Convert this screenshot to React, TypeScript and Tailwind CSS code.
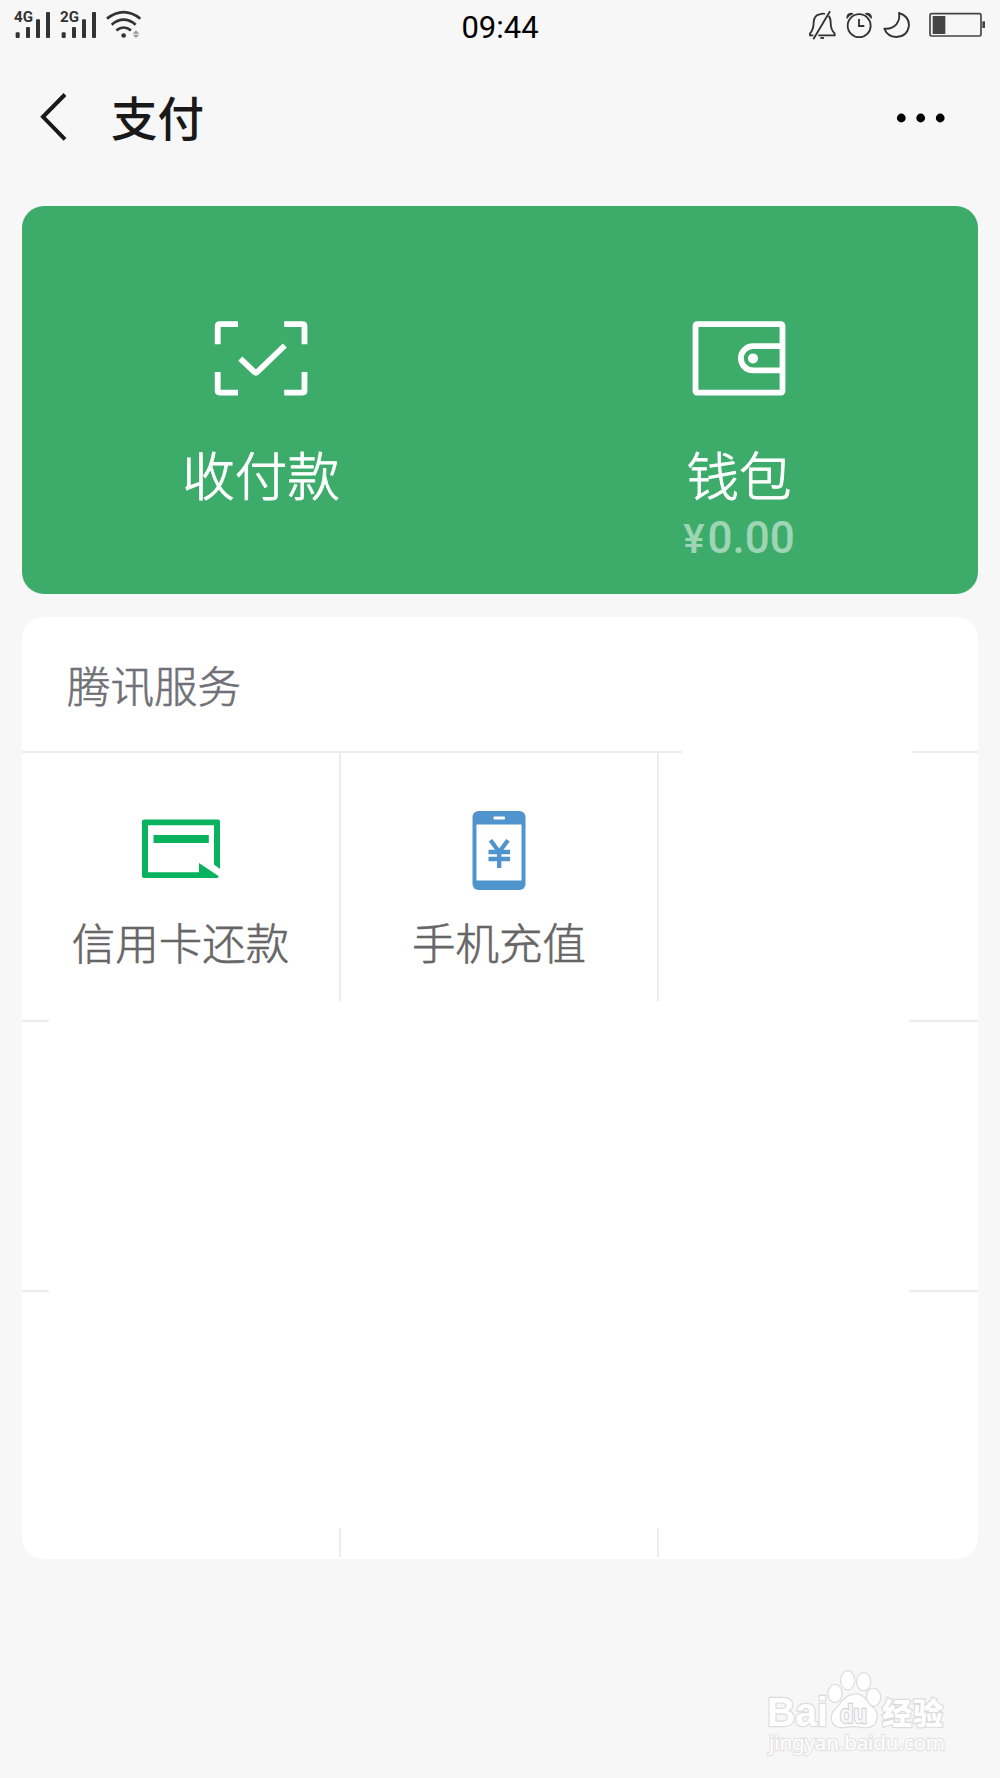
import React from 'react';

interface SignalProps {
  label: string;
}

const Signal: React.FC<SignalProps> = ({ label }) => (
  <svg className="w-[37px] h-[31px]" viewBox="42 30 111 93">
    <g fill="#333">
      <text x="42" y="66" fontSize="42" fontWeight="700" textLength="57" lengthAdjust="spacingAndGlyphs" fontFamily="Roboto, sans-serif">{label}</text>
      <rect x="47" y="97" width="12" height="17" rx="3" />
      <rect x="78" y="81" width="12" height="33" rx="3" />
      <rect x="108" y="58" width="12" height="56" rx="3" />
      <rect x="138" y="36" width="12" height="78" rx="3" />
    </g>
  </svg>
);

const Wifi: React.FC = () => (
  <svg className="w-[35px] h-[31px]" viewBox="318 30 105 93" fill="none" stroke="#333" strokeWidth="8">
    <path d="M321 56 Q371 17 421 56" />
    <path d="M335 74 Q371 44 407 74" />
    <path d="M349 91 Q371 74 393 91" />
    <circle cx="371" cy="106.500" r="7" fill="#333" stroke="none" />
    <path d="M398 101 L408 91 L418 101Z M398 104 L408 114 L418 104Z" fill="#999" stroke="none" />
  </svg>
);

const StatusBar: React.FC = () => (
  <div className="grid grid-cols-3 items-center h-[51px] pl-[14px] pr-[14px]">
    <div className="flex gap-[9px]">
      <Signal label="4G" />
      <Signal label="2G" />
      <Wifi />
    </div>
    <div className="text-center text-[31px] leading-[31px] pt-[3px] text-black font-[Roboto,sans-serif]">09:44</div>
    <div className="flex justify-end">
      <svg className="w-[29px] h-[31px] mr-2" viewBox="84 30 87 93" fill="none" stroke="#333" strokeWidth="5.500">
        <path d="M119 43 Q103 45 101 66 Q101 89 90 100 V106 H100 M115 106 H164 V100 Q152 89 152 68 Q152 54 146 48 M119 43 Q128 39 135 42" />
        <path d="M150 34 L100 118" />
        <path d="M121 114 H132" />
      </svg>
      <svg className="w-[28px] h-[31px] mr-[9px]" viewBox="195 30 84 93" fill="none" stroke="#333" strokeWidth="5.500">
        <circle cx="237.500" cy="77" r="34.500" />
        <path d="M237 57 V78 H253" />
        <path d="M199 55 Q199 39 213 38 Q218 38 221 41 Q208 46 202 56Z M276 55 Q276 39 262 38 Q257 38 254 41 Q267 46 273 56Z" fill="#333" stroke="none" />
      </svg>
      <svg className="w-[29px] h-[31px] mr-[17px]" viewBox="306 30 87 93" fill="none" stroke="#333" strokeWidth="5.500" strokeLinejoin="round">
        <path d="M357 39 Q387 48 387 76 Q383 109 349 111 Q322 110 313 86 Q336 88 349 73 Q361 58 357 39Z" />
      </svg>
      <svg className="w-[58px] h-[31px]" viewBox="444 30 174 93">
        <rect x="450" y="41" width="153" height="67" rx="5" fill="none" stroke="#444" strokeWidth="5" />
        <rect x="458" y="48" width="38" height="54" fill="#444" />
        <rect x="607" y="64" width="8" height="20" fill="#444" />
      </svg>
    </div>
  </div>
);

const Header: React.FC = () => (
  <header className="flex items-center h-[134px] pl-[40px] pr-[54px]">
    <svg className="w-[28px] h-[50px]" viewBox="0 0 28 50" fill="none" stroke="#191919" strokeWidth="4">
      <path d="M25 1.500 L3 23.800 L25 46.300" />
    </svg>
    <h1 className="ml-[43px] mb-[4px] text-[46.5px] leading-[54px] font-medium text-[#191919]">支付</h1>
    <svg className="ml-auto w-[50px] h-[10px]" viewBox="0 0 50 10" fill="#000">
      <circle cx="5.300" cy="5" r="4.400" />
      <circle cx="24.700" cy="5" r="4.400" />
      <circle cx="44.200" cy="5" r="4.400" />
    </svg>
  </header>
);

const ScanIcon: React.FC = () => (
  <svg className="w-[94px] h-[76px]" viewBox="0 0 94 76" fill="none" stroke="#fff" strokeWidth="5.800">
    <path d="M3.700 24.200 V6.200 Q3.700 4.200 5.700 4.200 H24" />
    <path d="M70.200 4.200 H88.500 Q90.500 4.200 90.500 6.200 V24.200" />
    <path d="M3.700 52 V70.600 Q3.700 72.600 5.700 72.600 H24" />
    <path d="M70.200 72.600 H88.500 Q90.500 72.600 90.500 70.600 V52" />
    <path d="M26.300 38.700 L40.800 52.300 Q41.900 53.400 43 52.300 L70.800 25.500" />
  </svg>
);

const WalletIcon: React.FC = () => (
  <svg className="w-[94px] h-[76px]" viewBox="0 0 94 76" fill="none" stroke="#fff" strokeWidth="5.800">
    <rect x="3.500" y="4.200" width="87" height="68.400" rx="1.500" />
    <path d="M90 26.200 H61 A12 12 0 0 0 61 50.400 H90" />
    <circle cx="61" cy="38.400" r="5" fill="#fff" stroke="none" />
  </svg>
);

const CreditCardIcon: React.FC = () => (
  <svg className="w-[78px] h-[80px]" viewBox="0 0 78 80" fill="#07b35e">
    <path d="M2 8.500 H76 Q78 8.500 78 10.500 V58 L72 53.500 V14.200 H6 V61.200 H57 V52 L76.500 65 Q77 67 75 67 H2 Q0 67 0 65 V10.500 Q0 8.500 2 8.500Z" />
    <rect x="11.500" y="24" width="55.300" height="8" />
  </svg>
);

const PhoneIcon: React.FC = () => (
  <svg className="w-[54px] h-[80px]" viewBox="0 0 54 80">
    <rect x="0.500" width="53" height="79" rx="6" fill="#4f94cd" />
    <rect x="4.500" y="13.500" width="45" height="56" fill="#fff" />
    <rect x="21.500" y="5.500" width="11.500" height="3" rx="1" fill="#fff" />
    <g fill="none" stroke="#4f94cd" strokeWidth="4.300">
      <path d="M18.500 29.300 L27.200 41 L36 29.300" />
      <path d="M16.500 41 H38 M16.500 48 H38 M27.200 40 V57" />
    </g>
  </svg>
);

interface ServiceProps {
  icon: React.ReactNode;
  label: string;
}

const Service: React.FC<ServiceProps> = ({ icon, label }) => (
  <div className="flex flex-col items-center pt-[58px]">
    {icon}
    <span className="mt-[24px] text-[43.5px] leading-[54px] font-light [-webkit-text-stroke:0.6px] text-[#666] whitespace-nowrap">{label}</span>
  </div>
);

const Watermark: React.FC = () => (
  <svg className="w-[190px] h-[96px]" viewBox="0 0 190 96" fill="#fff" stroke="#dcdcdc" strokeWidth="2.400" paintOrder="stroke">
    <text x="5" y="60" fontSize="40" fontWeight="700" textLength="61" lengthAdjust="spacingAndGlyphs" fontFamily="Liberation Sans, sans-serif">Bai</text>
    <ellipse cx="73" cy="27.500" rx="6.500" ry="8.500" />
    <ellipse cx="85.700" cy="14.300" rx="6.500" ry="9" />
    <ellipse cx="101.700" cy="15.700" rx="6.500" ry="8.500" />
    <ellipse cx="111.500" cy="31.300" rx="6.500" ry="8.500" />
    <path d="M91 29 Q98 27 104 34 Q107 39 112 43 Q117 49 113 57 Q109 62 101 61 Q91 59 82 61 Q72 62 70 54 Q69 46 77 40 Q83 30 91 29Z" />
    <text x="78" y="57" fontSize="26" textLength="27" lengthAdjust="spacingAndGlyphs" fontWeight="700" fontFamily="Liberation Sans, sans-serif" fill="#f7f7f7" stroke="#d4d4d4">du</text>
    <text x="120" y="58" fontSize="30" fontWeight="900" textLength="61" fontFamily="Noto Sans CJK SC, sans-serif">经验</text>
    <text x="7" y="84" fontSize="20.500" textLength="176" fontFamily="Noto Sans, sans-serif" stroke="#e4e4e4">jingyan.baidu.com</text>
  </svg>
);

const App: React.FC = () => {
  return (
    <div className="flex flex-col w-[1000px] h-[1778px] overflow-hidden bg-[#f7f7f7] font-['Noto_Sans_CJK_SC',sans-serif]">
      <StatusBar />
      <Header />

      <main className="flex flex-col gap-[23px] px-[22px] mt-[21px]">
        <section className="grid grid-cols-2 h-[388px] rounded-[22px] bg-[#3dac6b] text-white">
          <div className="flex flex-col items-center pt-[114px]">
            <ScanIcon />
            <span className="mt-[47px] text-[52.5px] leading-[60px] font-light [-webkit-text-stroke:0.9px]">收付款</span>
          </div>
          <div className="flex flex-col items-center pt-[114px]">
            <WalletIcon />
            <span className="mt-[47px] text-[52.5px] leading-[60px] font-light [-webkit-text-stroke:0.9px]">钱包</span>
            <span className="mt-[10px] text-[44px] leading-[50px] font-medium text-white/50 font-[Roboto,sans-serif]">
              <span className="mr-[3px] text-[40px]">¥</span>0.00
            </span>
          </div>
        </section>

        <section className="flex flex-col h-[942px] rounded-[22px] bg-white">
          <h2 className="flex items-center h-[134px] pl-[45px] pt-[2px] text-[43.5px] leading-[54px] font-light [-webkit-text-stroke:0.6px] text-[#707076]">腾讯服务</h2>
          <div className="flex justify-between h-[2px]">
            <div className="w-[660px] bg-[#ececec]" />
            <div className="w-[65px] bg-[#ececec]" />
          </div>
          <div className="grid grid-cols-[317px_2px_316px_2px] h-[267px]">
            <Service icon={<CreditCardIcon />} label="信用卡还款" />
            <div className="h-[248px] bg-[#ececec]" />
            <Service icon={<PhoneIcon />} label="手机充值" />
            <div className="h-[248px] bg-[#ececec]" />
          </div>
          <div className="flex justify-between h-[2px]">
            <div className="w-[27px] bg-[#ececec]" />
            <div className="w-[69px] bg-[#ececec]" />
          </div>
          <div className="h-[268px]" />
          <div className="flex justify-between h-[2px]">
            <div className="w-[27px] bg-[#ececec]" />
            <div className="w-[69px] bg-[#ececec]" />
          </div>
          <div className="flex items-end gap-[316px] h-[265px] pl-[317px]">
            <div className="w-[2px] h-[29px] bg-[#ececec]" />
            <div className="w-[2px] h-[29px] bg-[#ececec]" />
          </div>
        </section>
      </main>

      <footer className="flex justify-end mt-[107px] pr-[48px]">
        <Watermark />
      </footer>
    </div>
  );
};

export default App;
